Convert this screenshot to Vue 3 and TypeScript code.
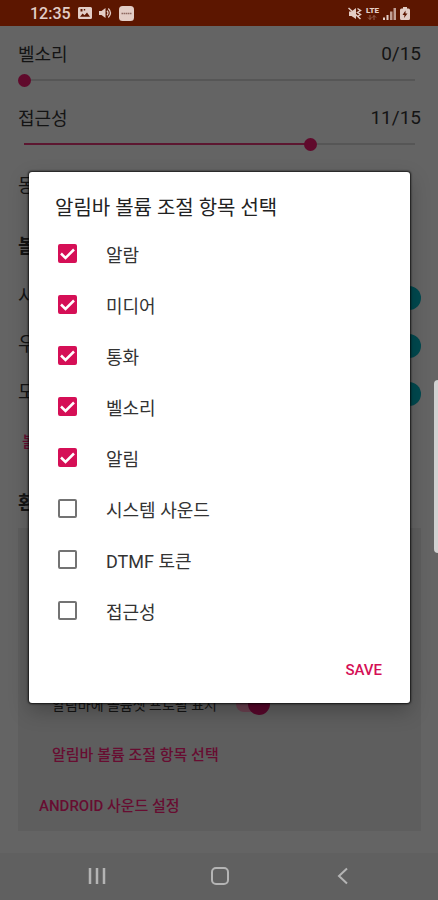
<script setup lang="ts">
import { reactive, ref } from 'vue'

interface Volume {
  id: string
  label: string
  value: number
}

interface Option {
  id: string
  label: string
  checked: boolean
}

const MAX_VOLUME = 15

const volumes = reactive<Volume[]>([
  { id: 'ringtone', label: '벨소리', value: 0 },
  { id: 'accessibility', label: '접근성', value: 11 },
])

const modes = reactive<Option[]>([
  { id: 'sound', label: '사', checked: true },
  { id: 'priority', label: '우', checked: true },
  { id: 'mode', label: '모', checked: true },
])

const items = reactive<Option[]>([
  { id: 'alarm', label: '알람', checked: true },
  { id: 'media', label: '미디어', checked: true },
  { id: 'call', label: '통화', checked: true },
  { id: 'ring', label: '벨소리', checked: true },
  { id: 'notification', label: '알림', checked: true },
  { id: 'system', label: '시스템 사운드', checked: false },
  { id: 'dtmf', label: 'DTMF 토큰', checked: false },
  { id: 'access', label: '접근성', checked: false },
])

const showProfile = ref(true)
const dialogOpen = ref(true)
</script>

<template>
  <div class="screen">
    <header class="status">
      <div class="status-group">
        <span class="clock">12:35</span>
        <svg class="i-picture" viewBox="0 0 14 12" aria-hidden="true">
          <path fill="currentColor" fill-rule="evenodd" d="M1.5 0h11A1.5 1.5 0 0 1 14 1.5v9a1.5 1.5 0 0 1-1.5 1.5h-11A1.5 1.5 0 0 1 0 10.500v-9A1.500 1.500 0 0 1 1.500 0zM2 9.800h10L9 5.500 6.500 8.300 4.600 6.600zM2.500 2v2.500h2V2zM5.800 2v1.500h1.400V2z" />
        </svg>
        <svg class="i-speaker" viewBox="0 0 13 12" aria-hidden="true">
          <path fill="currentColor" d="M0 4h2.500L6.500 1v10L2.500 8H0z" />
          <path fill="none" stroke="currentColor" stroke-width="1.300" d="M8 3.800q2 2.200 0 4.400M9.300 1.500q4.400 4.500 0 9" />
        </svg>
        <svg class="i-app" viewBox="0 0 15 15" aria-hidden="true">
          <rect width="15" height="15" rx="3.500" fill="currentColor" />
          <path d="M2.500 7.500h10" stroke="#8f6a62" stroke-width="1.500" stroke-dasharray="1.600 .5" />
        </svg>
      </div>
      <div class="status-group right">
        <svg class="i-mute" viewBox="0 0 14 13" aria-hidden="true">
          <path fill="currentColor" d="M1 4.500h2.500L8 1v11L3.500 9H1z" />
          <path fill="none" stroke="currentColor" stroke-width="1.500" d="M.5 1l12 11M9.500 1.500l3 2-3 2 3 2-3 2" />
        </svg>
        <span class="lte">
          LTE
          <svg viewBox="0 0 10 5" aria-hidden="true">
            <path fill="none" stroke="currentColor" d="M3 0v4.500M1 2.500l2 2 1.500-2M7 5V.5M5.500 2.500l1.500-2 2 2" />
          </svg>
        </span>
        <svg class="i-signal" viewBox="0 0 13 13" aria-hidden="true">
          <path fill="currentColor" d="M0 10.500h2V13H0zM3.500 8h2v5h-2z" />
          <path fill="currentColor" opacity=".75" d="M7 4.500h2.500V13H7zM10.500 1H13v12h-2.500z" />
        </svg>
        <svg class="i-battery" viewBox="0 0 10 13" aria-hidden="true">
          <path fill="currentColor" d="M3 0h4v1.500h1.500A1.500 1.500 0 0 1 10 3v8.500A1.500 1.500 0 0 1 8.500 13h-7A1.500 1.500 0 0 1 0 11.500V3a1.500 1.500 0 0 1 1.500-1.500H3z" />
          <path fill="#5c1600" d="M5.500 3.500L2.500 8h2l-.5 3 3.500-4.500h-2z" />
        </svg>
      </div>
    </header>

    <main class="content">
      <section v-for="volume in volumes" :key="volume.id" class="volume">
        <div class="volume-head">
          <label :for="volume.id">{{ volume.label }}</label>
          <output :for="volume.id">{{ volume.value }}/{{ MAX_VOLUME }}</output>
        </div>
        <input
          :id="volume.id"
          v-model.number="volume.value"
          class="slider"
          type="range"
          min="0"
          :max="MAX_VOLUME"
          :style="{ '--level': volume.value / MAX_VOLUME }"
        />
      </section>

      <p class="plain">동</p>

      <h2 class="heading">볼</h2>
      <label v-for="mode in modes" :key="mode.id" class="mode">
        <span>{{ mode.label }}</span>
        <input v-model="mode.checked" type="checkbox" class="switch teal" />
      </label>
      <button type="button" class="link first">볼</button>

      <h2 class="heading env">환</h2>
      <section class="card">
        <label class="profile">
          <span>알림바에 볼륨셋 프로필 표시</span>
          <input v-model="showProfile" type="checkbox" class="switch small" />
        </label>
        <button type="button" class="link indent" @click="dialogOpen = true">알림바 볼륨 조절 항목 선택</button>
        <button type="button" class="link">ANDROID 사운드 설정</button>
      </section>
    </main>

    <nav class="nav">
      <button type="button" aria-label="최근 앱">
        <svg viewBox="0 0 20 20"><path stroke-width="2.500" d="M3 2v16M10 2v16M17 2v16" /></svg>
      </button>
      <button type="button" aria-label="홈">
        <svg viewBox="0 0 20 20"><rect x="2" y="2" width="16" height="16" rx="4" stroke-width="2" /></svg>
      </button>
      <button type="button" aria-label="뒤로">
        <svg viewBox="0 0 20 20"><path stroke-width="2" d="M14 2.500L6 10l8 7.500" /></svg>
      </button>
    </nav>

    <div v-if="dialogOpen" class="overlay">
      <form class="dialog" role="dialog" aria-labelledby="dialog-title" @submit.prevent="dialogOpen = false">
        <h1 id="dialog-title">알림바 볼륨 조절 항목 선택</h1>
        <ul>
          <li v-for="item in items" :key="item.id">
            <label class="option">
              <span class="box">
                <input v-model="item.checked" type="checkbox" />
                <svg v-if="item.checked" viewBox="0 0 19 19" aria-hidden="true">
                  <path d="M3 9.500l4.500 4.500L16 5.500" />
                </svg>
              </span>
              <span>{{ item.label }}</span>
            </label>
          </li>
        </ul>
        <div class="actions">
          <button type="submit">SAVE</button>
        </div>
      </form>
    </div>

    <div class="edge-handle"></div>
  </div>
</template>

<style>
body {
  background: #646464;
}
</style>

<style scoped>
* {
  box-sizing: border-box;
}

.screen {
  position: relative;
  display: flex;
  flex-direction: column;
  min-height: 100vh;
  overflow: hidden;
  background: #646464;
  color: #141414;
  font-family: Roboto, "Noto Sans CJK KR", sans-serif;
  font-size: 18px;
}

h1,
h2,
p,
ul {
  margin: 0;
  padding: 0;
}

button {
  border: 0;
  padding: 0;
  background: none;
  font: inherit;
  cursor: pointer;
}

input {
  margin: 0;
  appearance: none;
}

.status {
  display: flex;
  justify-content: space-between;
  align-items: center;
  height: 26px;
  padding: 0 28px 0 30px;
  background: #5c1600;
  color: #e3cdc6;
}

.status-group {
  display: flex;
  align-items: center;
  gap: 7px;
}

.status-group.right {
  gap: 4px;
}

.clock {
  font-size: 16px;
  font-weight: 500;
}

.i-picture {
  width: 14px;
  height: 12px;
}

.i-speaker {
  width: 13px;
  height: 12px;
}

.i-app {
  width: 15px;
  height: 15px;
}

.i-mute {
  width: 14px;
  height: 13px;
}

.i-signal {
  width: 13px;
  height: 13px;
}

.i-battery {
  width: 10px;
  height: 13px;
}

.lte {
  display: flex;
  flex-direction: column;
  align-items: center;
  font-size: 8px;
  font-weight: 900;
  line-height: 8px;
}

.lte svg {
  width: 10px;
  height: 5px;
  color: #96604f;
}

.content {
  flex: 1;
  display: flex;
  flex-direction: column;
  padding: 10px 17px 21px 18px;
}

.volume {
  height: 64px;
}

.volume-head {
  display: flex;
  justify-content: space-between;
  align-items: center;
  height: 34px;
}

.volume-head output {
  font-size: 19px;
}

.slider {
  display: block;
  width: 100%;
  height: 20px;
  background:
    linear-gradient(#5c1630, #5c1630) 6px 50% / calc((100% - 13px) * var(--level)) 2px no-repeat,
    linear-gradient(#565656, #565656) 50% 50% / calc(100% - 12px) 2px no-repeat;
}

.slider::-webkit-slider-thumb {
  appearance: none;
  width: 13px;
  height: 13px;
  border-radius: 50%;
  background: #600a2c;
}

.plain {
  height: 44px;
  margin-bottom: 8px;
  line-height: 44px;
}

.heading {
  height: 58px;
  font-size: 19px;
  font-weight: 700;
  line-height: 62px;
}

.mode {
  display: flex;
  justify-content: space-between;
  align-items: center;
  height: 48px;
  font-size: 19px;
}

.mode span {
  padding-bottom: 8px;
}

.switch {
  display: flex;
  align-items: center;
  width: 40px;
  height: 24px;
}

.switch::before {
  content: "";
  flex: 1;
  height: 16px;
  margin-right: -18px;
  border-radius: 8px;
  background: #69404f;
}

.switch::after {
  content: "";
  width: 24px;
  height: 24px;
  border-radius: 50%;
  background: #57062a;
}

.switch.small {
  width: 34px;
}

.switch.small::after {
  width: 22px;
  height: 22px;
}

.switch.teal::before {
  background: #3d5c5f;
}

.switch.teal::after {
  background: #00494f;
}

.link {
  height: 51px;
  padding: 0 21px;
  color: #670d31;
  font-size: 15px;
  font-weight: 500;
  line-height: 20px;
  text-align: left;
}

.link.first {
  height: 48px;
  padding: 0 4px;
}

.env {
  height: 52px;
  margin-top: 10px;
  line-height: 56px;
}

.card {
  display: flex;
  flex-direction: column;
  padding-top: 150px;
  background: #5e5e5e;
}

.profile {
  display: flex;
  align-items: center;
  gap: 19px;
  height: 51px;
  padding: 0 34px;
  font-size: 14px;
}

.link.indent {
  padding: 0 34px;
}

.nav {
  display: flex;
  justify-content: space-around;
  align-items: center;
  height: 47px;
  padding: 0 34px 2px 36px;
  background: #606060;
}

.nav button {
  display: flex;
}

.nav svg {
  width: 20px;
  height: 20px;
  fill: none;
  stroke: #b4b4b4;
}

.overlay {
  position: absolute;
  inset: 0;
  display: flex;
  align-items: center;
  padding: 0 28px 25px 29px;
}

.dialog {
  flex: 1;
  border-radius: 3px;
  background: #fff;
  box-shadow:
    0 0 2px 1px rgba(0, 0, 0, 0.75),
    0 8px 20px rgba(0, 0, 0, 0.25);
}

.dialog h1 {
  height: 56px;
  padding: 8px 26px 0;
  color: #222;
  font-size: 20px;
  font-weight: 400;
  line-height: 56px;
}

.dialog ul {
  list-style: none;
}

.option {
  display: flex;
  align-items: center;
  gap: 29px;
  height: 51px;
  padding: 0 29px;
  color: #333;
}

.box {
  display: grid;
}

.box > * {
  grid-area: 1 / 1;
}

.box input {
  width: 19px;
  height: 19px;
  border: 2px solid #737373;
  border-radius: 2px;
}

.box input:checked {
  border-color: #d50f56;
  background: #d50f56;
}

.box svg {
  width: 19px;
  height: 19px;
  fill: none;
  stroke: #fff;
  stroke-width: 2.5;
  pointer-events: none;
}

.actions {
  display: flex;
  justify-content: flex-end;
  align-items: center;
  height: 67px;
  padding: 0 28px;
}

.actions button {
  color: #d50f56;
  font-size: 15px;
  font-weight: 500;
}

.edge-handle {
  position: absolute;
  top: 380px;
  right: 0;
  width: 4px;
  height: 173px;
  border-radius: 4px 0 0 4px;
  background: #d2d2d2;
}
</style>
